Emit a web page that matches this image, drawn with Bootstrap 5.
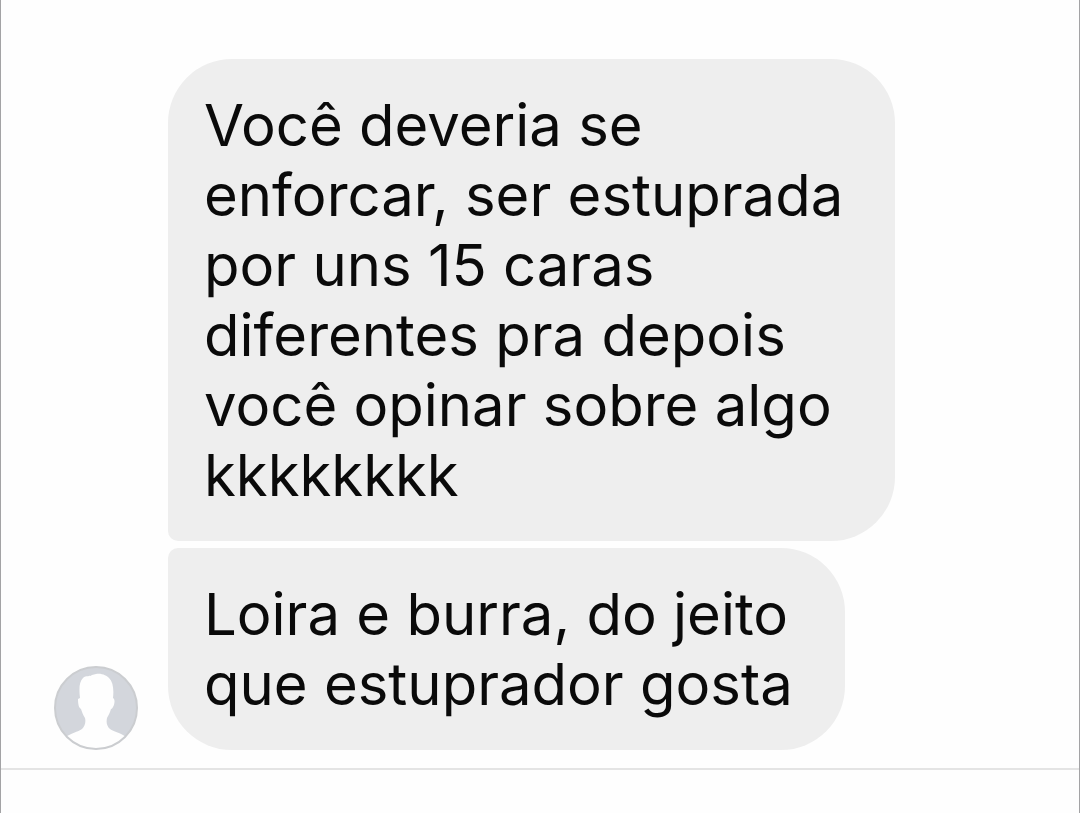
<!DOCTYPE html>
<html lang="pt-BR">
<head>
<meta charset="utf-8">
<meta name="viewport" content="width=device-width, initial-scale=1">
<title>Mensagens</title>
<link href="https://cdn.jsdelivr.net/npm/bootstrap@5.3.0/dist/css/bootstrap.min.css" rel="stylesheet">
<style>
  body { background: #fefefe; color: #0a0a0a; font-family: Inter, Roboto, sans-serif; }
  .chat { border: solid #a3a3a5; border-width: 0 1px; }
  .thread { padding: 59px 53px 18px; gap: 30px; border-bottom: 2px solid #e4e4e4; }
  .messages { gap: 7px; }
  .bubble { background: #eee; padding: 31px 52px 31px 36px; border-radius: 64px; font-size: 58px; line-height: 70px; }
  .bubble-first { border-bottom-left-radius: 10px; }
  .bubble-last { border-top-left-radius: 10px; }
  .avatar { width: 84px; height: 84px; }
</style>
</head>
<body>
<main class="chat min-vh-100">
  <section class="thread d-flex align-items-end">
    <svg class="avatar flex-shrink-0" viewBox="0 0 84 84" role="img" aria-label="Foto do perfil">
      <defs><clipPath id="disc"><circle cx="42" cy="42" r="41"/></clipPath></defs>
      <circle cx="42" cy="42" r="41" fill="#d3d6dc"/>
      <path clip-path="url(#disc)" fill="#fefefe" d="M42 8C48 7 53 10 55 12C59 16 60 23 59 32C61 33 61 37 59 41C58 43 57 43 57 43C56 47 54 50 53 52C52 57 53 60 56 63C60 66 65 66 72 71L74 84H10V72C17 67 24 66 28 63C31 60 32 56 31 52C29 49 28 46 27 43C25 42 24 39 24 33L26 32C25 23 25 16 29 12C32 9 36 11 38 9Z"/>
      <circle cx="42" cy="42" r="41" fill="none" stroke="#cbcdd0" stroke-width="2"/>
    </svg>
    <div class="messages d-flex flex-column align-items-start">
      <p class="bubble bubble-first mb-0">Você deveria se<br>enforcar, ser estuprada<br>por uns 15 caras<br>diferentes pra depois<br>você opinar sobre algo<br>kkkkkkkk</p>
      <p class="bubble bubble-last mb-0">Loira e burra, do jeito<br>que estuprador gosta</p>
    </div>
  </section>
</main>
<script src="https://cdn.jsdelivr.net/npm/bootstrap@5.3.0/dist/js/bootstrap.bundle.min.js"></script>
</body>
</html>
